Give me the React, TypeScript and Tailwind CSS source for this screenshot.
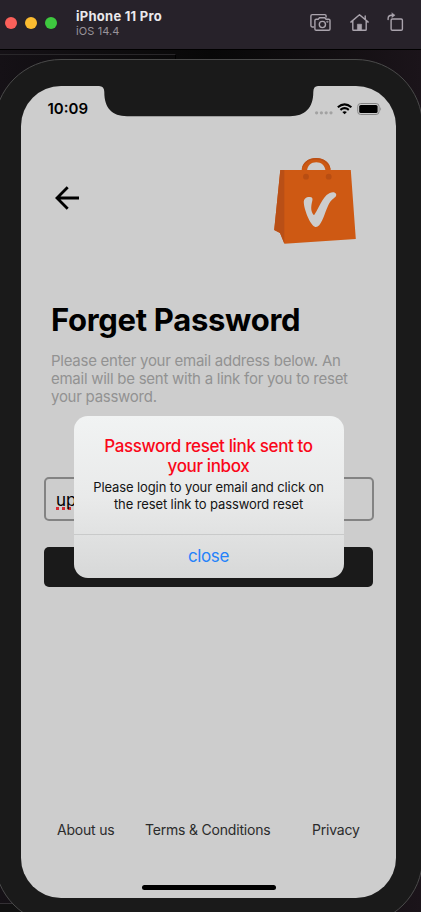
import React from "react";

function TitleBar() {
  return (
    <header className="flex h-[50px] shrink-0 items-start border-b border-black bg-[#27222a] pl-[5px]">
      <div className="mt-[17px] flex gap-2">
        <span className="size-3 rounded-full bg-[#fb605a]" />
        <span className="size-3 rounded-full bg-[#fcbc30]" />
        <span className="size-3 rounded-full bg-[#3ec93f]" />
      </div>
      <div className="ml-[19px] mt-[9px] flex flex-col whitespace-nowrap">
        <span className="text-[13px] font-bold leading-[15px] tracking-[0.26px] text-[#ebe9ec]">iPhone 11 Pro</span>
        <span className="text-[11px] leading-[14px] tracking-[0.1px] text-[#99949b]">iOS 14.4</span>
      </div>
      <svg className="ml-auto h-[49px] w-[111px]" viewBox="310 0 111 49" fill="none" stroke="#aaa4ad" strokeWidth="1.4" strokeLinecap="round" strokeLinejoin="round">
        <path d="M313.5 27H312.2Q310.9 27 310.9 25.6V16Q310.9 14.6 312.3 14.6H324.8Q326.1 14.6 326.1 16V17" />
        <path d="M316.2 19.3H318.2L319.5 17.8H324.8L326.1 19.3H328.7Q330 19.3 330 20.6V29.1Q330 30.3 328.7 30.3H316.2Q314.9 30.3 314.9 29.1V20.6Q314.9 19.3 316.2 19.3Z" />
        <circle cx="322.4" cy="24.5" r="3.1" />
        <circle cx="327.4" cy="21.8" r=".35" />
        <path d="M350.8 22.1L359.5 14.7L368.2 22.1M352.8 21V29.4Q352.8 30.2 353.6 30.2H365.4Q366.2 30.2 366.2 29.4V21M365.2 19V16" />
        <path d="M357.4 30V24.2H361.6V30Z" fill="#aaa4ad" strokeWidth=".6" />
        <rect x="391.1" y="19" width="11.3" height="11.3" rx="1.3" />
        <path d="M388.1 19.5V18.7Q388.1 15.2 391.6 15.2H393" />
        <path d="M392 12.9L395.1 15.2L392 17.5Z" fill="#aaa4ad" strokeWidth=".4" />
      </svg>
    </header>
  );
}

function StatusBar() {
  return (
    <div className="flex h-11 shrink-0 items-start pl-[26.5px] pr-[14px]">
      <span className="mt-[13px] text-[15px] font-semibold leading-5 tracking-[0px] text-black">10:09</span>
      <svg className="ml-auto mt-[14px] h-[18px] w-[68px]" viewBox="314 100 68 18">
        <g fill="#a2a2a2">
          <circle cx="316.6" cy="112.8" r="1.6" />
          <circle cx="321.4" cy="112.8" r="1.6" />
          <circle cx="326.2" cy="112.8" r="1.6" />
          <circle cx="331" cy="112.8" r="1.6" />
        </g>
        <g fill="none" stroke="black" strokeWidth="2.1">
          <path d="M337.8 107.2Q344.6 101.6 351.4 107.2" />
          <path d="M340.4 109.9Q344.6 106.4 348.8 109.9" />
        </g>
        <path d="M342.3 112.1Q344.6 110.2 346.9 112.1L344.6 114.2Z" />
        <rect x="357.7" y="103.5" width="21.4" height="11" rx="3" fill="none" stroke="#858585" />
        <rect x="359.2" y="105" width="18.4" height="8" rx="1.6" />
        <path d="M380.3 107Q382 109 380.3 111Z" fill="#858585" />
      </svg>
    </div>
  );
}

function BagLogo() {
  return (
    <svg className="h-[88px] w-[84px]" viewBox="273 157 84 88">
      <path d="M301.7 171C301.7 163 308 158 316.2 158C324.5 158 330.8 163 330.8 171H325.6C325 165.5 321.4 162.2 316.3 162.2C311 162.2 307.5 165.5 307 171Z" fill="#cc5812" />
      <path d="M301.7 170C302.2 162.5 308.5 158 316 158C323.5 158 329.6 162.5 330.6 170C327.8 162.8 322.4 159.6 316 159.6C309.4 159.6 304.2 162.8 301.7 170Z" fill="#b94f16" />
      <path d="M280.3 170H350.8L355.8 239L284.5 243.8L280 233L274.2 230Z" fill="#ce5913" />
      <path d="M280.3 170H284.3V243.8L280 233L274.2 230Z" fill="#b94f16" />
      <circle cx="306" cy="176.7" r="2.9" fill="#b84d12" />
      <circle cx="328.7" cy="176.7" r="2.9" fill="#b84d12" />
      <path d="M303.8 202.8C303.5 198.7 306.3 196.8 310 197C313.3 197.3 312.7 199.7 311.9 202.5C310.9 207 310.7 212.3 314 215.2C317 211.7 320.5 201.5 326.6 195.1C330 191.7 334.8 191.2 336 193.7C337 196 334.6 197.8 332 199.7C327.5 204 325.4 213.7 322.2 220.3C319.9 225.2 317.5 227.9 314.8 226.8C310.4 225 304.3 210.5 303.8 202.8Z" fill="#cdcdcd" />
    </svg>
  );
}

function Alert() {
  return (
    <div className="absolute left-[52.5px] top-[329.6px] flex h-[162.6px] w-[270px] flex-col overflow-hidden rounded-[14px] bg-gradient-to-b from-[#f1f3f3] via-[#e9eaea] to-[#d7d8d8] text-center">
      <div className="flex h-[119px] flex-col whitespace-nowrap border-b border-[#c9caca] pt-5">
        <h2 className="text-[17px] font-medium leading-5 tracking-[-0.36px] text-[#fa0719]">Password reset link sent to<br />your inbox</h2>
        <p className="mt-[3px] text-[13px] leading-[17.5px] tracking-[-0.11px] text-[#141414]">Please login to your email and click on<br />the reset link to password reset</p>
      </div>
      <button className="flex-1 text-[17px] leading-5 tracking-[-0.4px] text-[#2482fa]">close</button>
    </div>
  );
}

export default function App() {
  return (
    <div className="flex h-[912px] w-[421px] flex-col overflow-hidden bg-[#0c0a0d] font-['Inter','Liberation_Sans',sans-serif]">
      <TitleBar />
      <main className="relative min-h-0 flex-1 overflow-hidden bg-gradient-to-r from-[#151116] via-[#080808] to-[#1b141a]">
        <div className="absolute left-0 top-1 h-6 w-[176px] border-r border-t border-r-black border-t-[#29272a]" />
        <div className="absolute bottom-0 left-0 h-[9px] w-10 border-t border-[#333034] bg-[#111]" />
        <div className="relative -ml-[6px] mt-[9px] h-[866px] w-[429px] rounded-[67px] border border-[#4a4a4a] bg-[#1a1a1a] p-[26px]">
          <div className="relative flex h-[812px] w-[375px] flex-col overflow-hidden rounded-[40px] bg-[#cdcdcd]">
            <svg className="absolute left-[78px] top-0 h-[31px] w-[220px]" viewBox="78 0 220 31">
              <path d="M78 0Q83.3 0 83.3 6C83.3 22 91 30.2 106 30.2H269C284 30.2 292.3 22 292.3 6Q292.3 0 297 0Z" fill="#1a1a1a" />
            </svg>
            <StatusBar />
            <div className="flex h-[160px] shrink-0 items-start justify-between pl-[33px] pr-[39px] pt-[27px]">
              <svg className="mt-[28px] h-[26px] w-[26px]" viewBox="54 185 26 26" fill="none" stroke="black" strokeWidth="2.8">
                <path d="M79 198H57.5M67.7 187.2L57 198L67.7 208.8" />
              </svg>
              <BagLogo />
            </div>
            <div className="flex flex-col whitespace-nowrap pl-[30px] pt-[10px]">
              <h1 className="text-[31px] font-bold leading-10 tracking-[-0.3px] text-black">Forget Password</h1>
              <p className="mt-[12px] text-[15px] leading-[18px] tracking-[-0.26px] text-[#929292]">
                Please enter your email address below. An<br />email will be sent with a link for you to reset<br />your password.
              </p>
            </div>
            <div className="ml-[22.5px] mt-[71px] flex h-11 w-[330px] shrink-0 items-center rounded-[5px] border-2 border-[#838383] pl-[10.5px]">
              <span className="pt-px text-[17px] leading-5 text-black underline decoration-[#d52b35] decoration-dotted decoration-[3px] underline-offset-1 [text-decoration-skip-ink:none]">upd</span>
            </div>
            <div className="ml-[23.4px] mt-[26px] h-10 w-[328.5px] shrink-0 rounded-[5px] bg-[#1a1a1a]" />
            <footer className="mt-auto flex h-5 shrink-0 whitespace-nowrap pl-9 text-[14px] leading-5 tracking-[-0.2px] text-[#2b2b2b]">
              <span className="w-[88px]">About us</span>
              <span className="w-[167px]">Terms &amp; Conditions</span>
              <span>Privacy</span>
            </footer>
            <div className="mb-2 ml-[121px] mt-[45px] h-[5px] w-[134px] shrink-0 rounded-full bg-black" />
            <Alert />
          </div>
        </div>
      </main>
    </div>
  );
}
